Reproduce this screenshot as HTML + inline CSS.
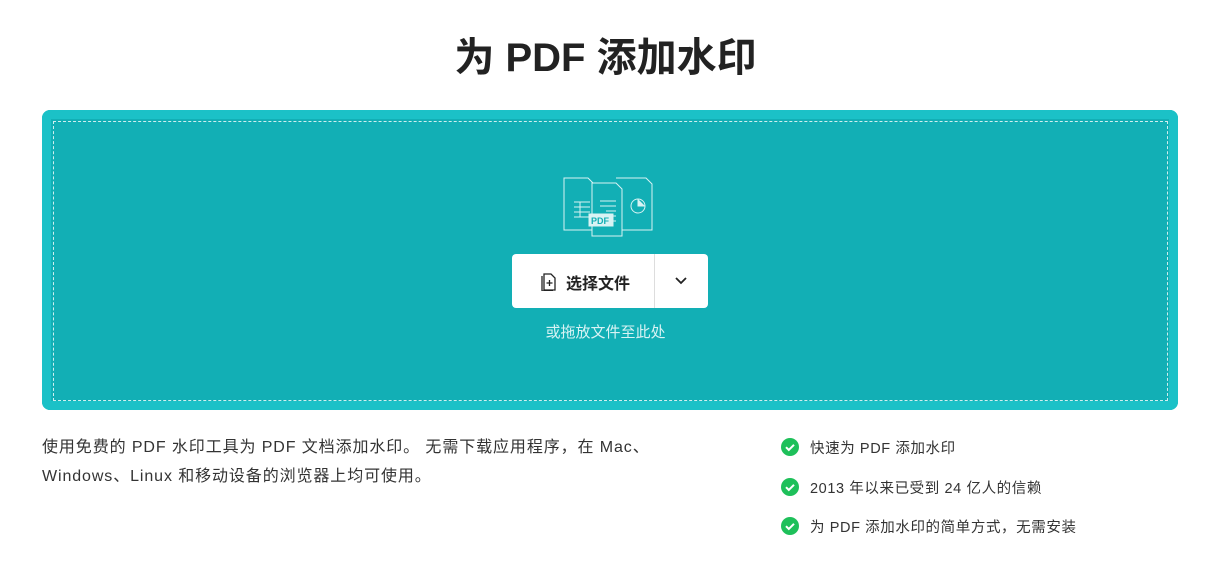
<!DOCTYPE html>
<html><head><meta charset="utf-8"><style>
body{margin:0;width:1211px;height:563px;background:#fff;font-family:"Liberation Sans","Noto Sans CJK SC",sans-serif;color:#333;position:relative;overflow:hidden}
h1{position:absolute;top:30px;left:0;width:1211px;text-align:center;margin:0;font-size:40px;font-weight:700;color:#222;line-height:56px}
.box{position:absolute;left:42px;top:110px;width:1136px;height:300px;background:#12afb5;border-radius:8px;box-shadow:inset 0 0 0 9px #1bc1c7}
.dash{position:absolute;left:53px;top:121px;width:1113px;height:278px;border:1px dashed #cfeff0}
.btn{position:absolute;left:512px;top:254px;width:196px;height:54px;background:#fff;border-radius:4px}
.btn .sep{position:absolute;left:142px;top:0;width:1px;height:54px;background:#ddd}
.btn .t{position:absolute;left:54px;top:16px;font-size:16px;font-weight:700;color:#222}
.drop{position:absolute;top:321px;left:0;width:1211px;text-align:center;color:#d8f3f4;font-size:15px}
.desc{position:absolute;left:42px;top:433px;font-size:16px;letter-spacing:0.9px;line-height:29px;color:#333;white-space:nowrap}
.li{position:absolute;left:781px;font-size:14.5px;letter-spacing:0.6px;color:#333}
.li svg{position:absolute;left:0;top:1px}
.li span{position:absolute;left:29px;top:0;white-space:nowrap}
</style></head><body>
<h1>为 PDF 添加水印</h1>
<div class="box"></div><div class="dash"></div>
<svg style="position:absolute;left:560px;top:175px" width="100" height="65" viewBox="0 0 100 65" fill="none" stroke="#d8f3f4" stroke-width="1">
<path d="M4 3h24l6 6v46H4z"/><path d="M14 27h16M14 32h16M14 37h16M20 27v15M14 42h16"/>
<path d="M56 3h30l6 6v46H56"/><circle cx="78" cy="31" r="7"/><path d="M78 24v7h7" fill="#d8f3f4"/>
<path d="M32 8h24l6 6v47H32z" fill="#12afb5"/><path d="M40 26h16M40 31h16M46 36h10M46 41h10M46 46h10"/>
<rect x="29" y="39" width="24" height="12" fill="#d8f3f4"/><text x="31" y="49" font-size="9" font-weight="700" fill="#12afb5" stroke="none" font-family="Liberation Sans">PDF</text>
</svg>
<div class="btn"><svg style="position:absolute;left:28px;top:17px" width="18" height="20" viewBox="0 0 18 20" fill="none" stroke="#222" stroke-width="1.3"><path d="M4 3h7l4 4v12H4z"/><path d="M2 5v15h11"/><path d="M9.5 9v6M6.5 12h6"/></svg><span class="t">选择文件</span><div class="sep"></div><svg style="position:absolute;left:162px;top:22px" width="14" height="10" viewBox="0 0 14 10" fill="none" stroke="#222" stroke-width="1.8"><path d="M2 2l5 5 5-5"/></svg></div>
<div class="drop">或拖放文件至此处</div>
<div class="desc">使用免费的 PDF 水印工具为 PDF 文档添加水印。 无需下载应用程序，在 Mac、<br>Windows、Linux 和移动设备的浏览器上均可使用。</div>
<div class="li" style="top:437px"><svg width="18" height="18" viewBox="0 0 18 18"><circle cx="9" cy="9" r="9" fill="#1ec05a"/><path d="M5 9.2l2.8 2.8L13 6.8" stroke="#fff" stroke-width="2" fill="none"/></svg><span>快速为 PDF 添加水印</span></div>
<div class="li" style="top:477px"><svg width="18" height="18" viewBox="0 0 18 18"><circle cx="9" cy="9" r="9" fill="#1ec05a"/><path d="M5 9.2l2.8 2.8L13 6.8" stroke="#fff" stroke-width="2" fill="none"/></svg><span>2013 年以来已受到 24 亿人的信赖</span></div>
<div class="li" style="top:516px"><svg width="18" height="18" viewBox="0 0 18 18"><circle cx="9" cy="9" r="9" fill="#1ec05a"/><path d="M5 9.2l2.8 2.8L13 6.8" stroke="#fff" stroke-width="2" fill="none"/></svg><span>为 PDF 添加水印的简单方式，无需安装</span></div>
</body></html>
